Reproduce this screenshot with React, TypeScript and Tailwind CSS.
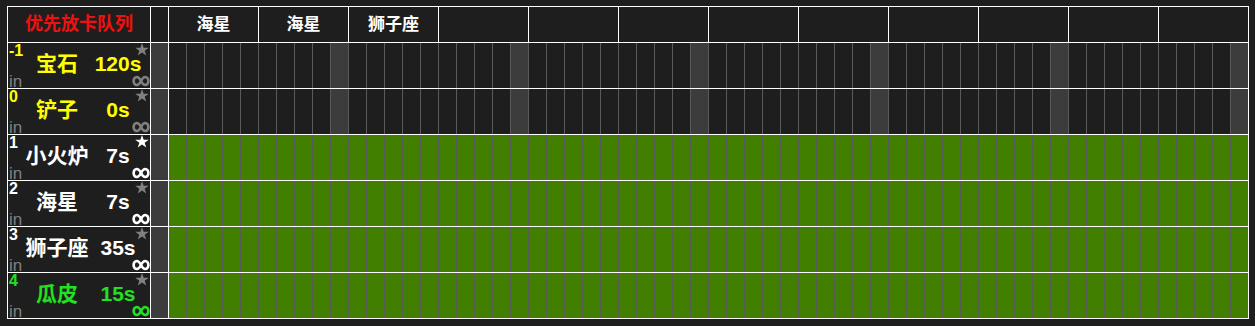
import React from "react";

type Row = {
  idx: string;
  name: string;
  time: string;
  text: string;
  star: string;
  inf: string;
  active: boolean;
};

const rows: Row[] = [
  { idx: "-1", name: "宝石", time: "120s", text: "text-[#ffff00]", star: "#808080", inf: "#808080", active: false },
  { idx: "0", name: "铲子", time: "0s", text: "text-[#ffff00]", star: "#808080", inf: "#808080", active: false },
  { idx: "1", name: "小火炉", time: "7s", text: "text-white", star: "#ffffff", inf: "#ffffff", active: true },
  { idx: "2", name: "海星", time: "7s", text: "text-white", star: "#808080", inf: "#ffffff", active: true },
  { idx: "3", name: "狮子座", time: "35s", text: "text-white", star: "#808080", inf: "#ffffff", active: true },
  { idx: "4", name: "瓜皮", time: "15s", text: "text-[#22e022]", star: "#808080", inf: "#22e022", active: true },
];

const headers = ["海星", "海星", "狮子座", "", "", "", "", "", "", "", "", ""];

const cols = Array.from({ length: 60 }, (_, i) => i);

function Star({ color }: { color: string }) {
  return (
    <svg width="14" height="13" viewBox="0 0 24 23">
      <path
        d="M12 0l2.9 8.2H24l-7.3 5.4 2.8 8.6L12 17l-7.5 5.2 2.8-8.6L0 8.2h9.1z"
        fill={color}
      />
    </svg>
  );
}

function Infinity({ color }: { color: string }) {
  return (
    <svg width="18" height="12" viewBox="0 0 18 12">
      <path
        d="M9 6C7.5 3 6.5 2 4.8 2 3 2 1.6 3.8 1.6 6S3 10 4.8 10C6.5 10 7.5 9 9 6S11.5 2 13.2 2C15 2 16.4 3.8 16.4 6S15 10 13.2 10C11.5 10 10.5 9 9 6z"
        fill="none"
        stroke={color}
        strokeWidth="2.6"
      />
    </svg>
  );
}

export default function App() {
  return (
    <div
      className="w-[1255px] h-[326px] bg-[#1e1e1e] pt-[6px] pl-[7px]"
      style={{ fontFamily: '"Liberation Sans", "Noto Sans CJK SC", sans-serif' }}
    >
      <div className="w-[1242px] border-l border-t border-white">
        {/* = HEADER = */}
        <div className="flex h-[36px] border-b border-white">
          <div className="w-[143px] border-r border-white flex items-center justify-center text-[18px] font-bold text-[#ee1111]">
            优先放卡队列
          </div>
          <div className="w-[18px] border-r border-white" />
          {headers.map((h, i) => (
            <div
              key={i}
              className="w-[90px] border-r border-white flex items-center justify-center text-[17px] font-bold text-white"
            >
              {h}
            </div>
          ))}
        </div>

        {/* = ROWS = */}
        {rows.map((r) => (
          <div key={r.idx} className="flex h-[46px] border-b border-white">
            <div className={`relative w-[143px] border-r border-white ${r.text}`}>
              <span className="absolute left-[1px] top-[1px] text-[16px] font-bold leading-[14px]">
                {r.idx}
              </span>
              <span className="absolute left-[1px] bottom-0 text-[17px] leading-[13px] text-[#808080]">
                in
              </span>
              <span className="absolute right-[1px] top-0">
                <Star color={r.star} />
              </span>
              <span className="absolute right-0 bottom-[1px] flex">
                <Infinity color={r.inf} />
              </span>
              <div className="flex h-full items-center pb-[5px] font-bold text-[21px] leading-none">
                <div className="w-[98px] flex justify-center whitespace-nowrap">{r.name}</div>
                <div className="w-[24px] flex justify-center whitespace-nowrap">{r.time}</div>
              </div>
            </div>
            <div className="w-[18px] border-r border-white bg-[#3c3c3c]" />
            {cols.map((c) => (
              <div
                key={c}
                className={`w-[18px] border-r ${c === 59 ? "border-white" : "border-[#5a5a5a]"} ${
                  r.active ? "bg-[#407f00]" : c % 10 === 9 ? "bg-[#3c3c3c]" : ""
                }`}
              />
            ))}
          </div>
        ))}
      </div>
    </div>
  );
}
